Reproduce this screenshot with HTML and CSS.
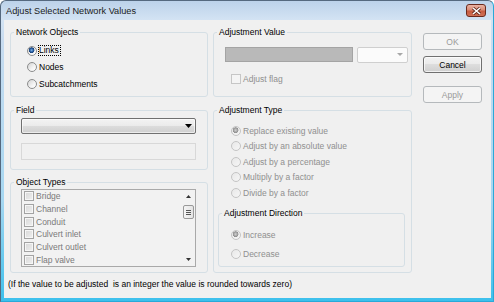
FILE: index.html
```html
<!DOCTYPE html>
<html>
<head>
<meta charset="utf-8">
<link rel="stylesheet" href="styles.css">
</head>
<body>
<div class="window">
  <div class="titlebar">
    <span class="title">Adjust Selected Network Values</span>
    <span class="close"><svg width="11" height="8" viewBox="0 0 11 8"><path d="M2 1l7 6M9 1L2 7" stroke="#5a2418" stroke-width="3"/><path d="M2 1l7 6M9 1L2 7" stroke="#fff" stroke-width="1.6"/></svg></span>
  </div>
  <div class="client">
    <div class="main">
      <div class="col-left">
        <fieldset class="group g-netobj">
          <legend>Network Objects</legend>
          <div class="netobj-body">
            <div class="opt"><span class="radio checked"></span><span class="focus">Links</span></div>
            <div class="opt"><span class="radio"></span><span>Nodes</span></div>
            <div class="opt"><span class="radio"></span><span>Subcatchments</span></div>
          </div>
        </fieldset>
        <fieldset class="group g-field">
          <legend>Field</legend>
          <div class="field-body">
            <div class="combo"><svg width="7" height="4" viewBox="0 0 7 4"><path d="M0 0h7L3.5 4z" fill="#000"/></svg></div>
            <div class="edit-dis"></div>
          </div>
        </fieldset>
        <fieldset class="group g-types">
          <legend>Object Types</legend>
          <div class="types-body">
            <div class="listbox">
              <div class="items">
                <div class="item"><span class="chk list"></span><span>Bridge</span></div>
                <div class="item"><span class="chk list"></span><span>Channel</span></div>
                <div class="item"><span class="chk list"></span><span>Conduit</span></div>
                <div class="item"><span class="chk list"></span><span>Culvert inlet</span></div>
                <div class="item"><span class="chk list"></span><span>Culvert outlet</span></div>
                <div class="item"><span class="chk list"></span><span>Flap valve</span></div>
              </div>
              <div class="sb">
                <div class="sb-btn"><svg width="5" height="3" viewBox="0 0 5 3"><path d="M0 3h5L2.5 0z" fill="#333"/></svg></div>
                <div class="sb-track">
                  <div class="thumb"><span></span><span></span><span></span></div>
                </div>
                <div class="sb-btn"><svg width="5" height="3" viewBox="0 0 5 3"><path d="M0 0h5L2.5 3z" fill="#333"/></svg></div>
              </div>
            </div>
          </div>
        </fieldset>
      </div>
      <div class="col-mid">
        <fieldset class="group g-value">
          <legend>Adjustment Value</legend>
          <div class="value-body">
            <div class="value-row">
              <div class="edit-gray"></div>
              <div class="combo-dis"><svg width="6" height="3" viewBox="0 0 6 3"><path d="M0 0h6L3 3z" fill="#a8a8a8"/></svg></div>
            </div>
            <div class="chk-row"><span class="chk dis"></span><span class="dis-text">Adjust flag</span></div>
          </div>
        </fieldset>
        <fieldset class="group g-type">
          <legend>Adjustment Type</legend>
          <div class="type-body">
            <div class="opt t"><span class="radio dis checked"></span><span class="dis-text">Replace existing value</span></div>
            <div class="opt t"><span class="radio dis"></span><span class="dis-text">Adjust by an absolute value</span></div>
            <div class="opt t"><span class="radio dis"></span><span class="dis-text">Adjust by a percentage</span></div>
            <div class="opt t"><span class="radio dis"></span><span class="dis-text">Multiply by a factor</span></div>
            <div class="opt t"><span class="radio dis"></span><span class="dis-text">Divide by a factor</span></div>
            <fieldset class="group g-dir">
              <legend>Adjustment Direction</legend>
              <div class="dir-body">
                <div class="opt d"><span class="radio dis checked"></span><span class="dis-text">Increase</span></div>
                <div class="opt d"><span class="radio dis"></span><span class="dis-text">Decrease</span></div>
              </div>
            </fieldset>
          </div>
        </fieldset>
      </div>
      <div class="col-btns">
        <div class="btn disabled">OK</div>
        <div class="btn cancel">Cancel</div>
        <div class="btn disabled apply">Apply</div>
      </div>
    </div>
    <p class="note">(If the value to be adjusted&nbsp; is an integer the value is rounded towards zero)</p>
  </div>
</div>
</body>
</html>
```

FILE: styles.css
```css
* { box-sizing: border-box; }
html, body { margin: 0; padding: 0; }
body {
  font-family: "Liberation Sans", Arial, sans-serif;
  font-size: 8.5px;
  line-height: 12px;
  color: #000;
  background: #fff;
}
.window {
  width: 494px;
  height: 302px;
  display: flex;
  flex-direction: column;
  border: 1px solid #55697f;
  border-right-color: #2aa9d8;
  border-bottom-color: #2aa9d8;
  border-radius: 6px 6px 0 0;
  background: linear-gradient(to bottom, #bcd2ea 0, #d3e3f3 19px, #c8dcf0 40px, #a6d7f1 200px, #3cc0ec 300px);
  padding: 0 2px 3px 3px;
}
.titlebar {
  height: 19px;
  flex: none;
  display: flex;
  align-items: center;
  justify-content: space-between;
  padding: 0 5px 0 2px;
}
.title {
  font-size: 9.2px;
  color: #1b1b1b;
}
.close {
  width: 20px;
  height: 13px;
  border: 1px solid #6b2a1e;
  border-radius: 3px;
  background: linear-gradient(to bottom, #eab3a4 0, #d98c77 45%, #c75b40 55%, #cf7056 100%);
  display: flex;
  align-items: center;
  justify-content: center;
}
.client {
  flex: 1;
  background: #f0f0f0;
  padding-top: 6px;
}
.main {
  display: flex;
  padding-left: 6px;
}
.group {
  margin: 0;
  padding: 0;
  min-width: 0;
  border: 1px solid #d5dfe5;
  border-radius: 3px;
}
.group legend {
  padding: 0 2px;
  margin-left: 3px;
  line-height: 12px;
}
.col-left {
  width: 198px;
  flex: none;
  display: flex;
  flex-direction: column;
}
.g-netobj { height: 71px; }
.g-field { height: 66px; margin-top: 7px; }
.g-types { height: 97px; margin-top: 6px; }

.netobj-body { padding: 4.5px 0 0 16px; }
.opt {
  display: flex;
  align-items: center;
  height: 16.5px;
  gap: 2px;
  white-space: nowrap;
}
.focus {
  border: 1px dotted #000;
  padding: 0 1px 0 0;
  margin-left: -1px;
  line-height: 9px;
}
.radio {
  width: 10px;
  height: 10px;
  flex: none;
  border-radius: 50%;
  border: 1px solid #8b8c8c;
  background: linear-gradient(135deg, #d2d2d2, #f4f4f4 60%, #ffffff);
}
.radio.checked {
  background:
    radial-gradient(circle at 45% 40%, #7fb4e4 0, #2b63a8 1.6px, #173f78 2.6px, transparent 3.1px),
    linear-gradient(135deg, #d2d2d2, #f4f4f4 60%, #ffffff);
}
.radio.dis {
  border-color: #c4c4c4;
  background: linear-gradient(135deg, #e8e8e8, #f6f6f6);
}
.radio.dis.checked {
  background:
    radial-gradient(circle at 45% 40%, #d0d0d0 0, #a4a4a4 1.8px, #8e8e8e 2.6px, transparent 3.1px),
    linear-gradient(135deg, #e8e8e8, #f6f6f6);
}
.dis-text { color: #8f8f8f; }

.field-body { padding: 2px 0 0 10px; }
.combo {
  width: 175px;
  height: 16px;
  border: 1px solid #707070;
  border-radius: 2px;
  background: linear-gradient(to bottom, #f3f3f3 0, #ebebeb 48%, #dcdcdc 52%, #cfcfcf 100%);
  box-shadow: inset 0 0 0 1px rgba(255,255,255,0.6);
  display: flex;
  align-items: center;
  justify-content: flex-end;
  padding-right: 3px;
}
.edit-dis {
  width: 175px;
  height: 17px;
  margin-top: 9px;
  border: 1px solid #d8d8d8;
  background: #f0f0f0;
}

.types-body { padding: 1px 0 0 10px; }
.listbox {
  width: 175px;
  height: 78px;
  border: 1px solid #a9a9a9;
  background: #f2f2f2;
  display: flex;
}
.items { flex: 1; padding-left: 2px; }
.item {
  height: 12.67px;
  display: flex;
  align-items: center;
  gap: 2px;
  color: #7a7a7a;
}
.chk {
  width: 10px;
  height: 10px;
  flex: none;
  border: 1px solid #8e8f8f;
  background: linear-gradient(135deg, #dcdcdc, #f8f8f8);
  box-shadow: inset 0 0 0 1px #f4f4f4;
}
.chk.list {
  border-color: #a3a3a3;
  background: linear-gradient(135deg, #d8d8d8, #efefef);
  box-shadow: inset 0 0 0 1px #f6f6f6;
}
.chk.dis {
  border-color: #c6c6c6;
  background: #f4f4f4;
  box-shadow: none;
}
.sb {
  width: 13px;
  flex: none;
  display: flex;
  flex-direction: column;
  margin-right: 0;
}
.sb-btn {
  height: 13px;
  display: flex;
  align-items: center;
  justify-content: center;
}
.sb-track { flex: 1; padding: 2px 1px 0; }
.thumb {
  height: 14px;
  border: 1px solid #999;
  border-radius: 2px;
  background: linear-gradient(to right, #f4f4f4, #e4e4e4);
  display: flex;
  flex-direction: column;
  align-items: center;
  justify-content: center;
  gap: 1px;
}
.thumb span {
  width: 5px;
  height: 1px;
  background: #555;
}

.col-mid {
  width: 199px;
  flex: none;
  margin-left: 5px;
}
.g-value { height: 71px; }
.value-body { padding: 8.5px 0 0 11px; }
.value-row {
  display: flex;
  align-items: center;
  gap: 4px;
}
.edit-gray {
  width: 128px;
  height: 15px;
  border: 1px solid #a4a4a4;
  background: #b9b9b9;
}
.combo-dis {
  width: 51px;
  height: 16px;
  border: 1px solid #cfcfcf;
  border-radius: 2px;
  background: #fbfbfb;
  display: flex;
  align-items: center;
  justify-content: flex-end;
  padding-right: 4px;
}
.chk-row {
  display: flex;
  align-items: center;
  gap: 2px;
  margin: 10.5px 0 0 6px;
  height: 11px;
}

.g-type { height: 169px; margin-top: 7px; }
.type-body { padding: 7px 0 0 4px; }
.opt.t { height: 15.5px; padding-left: 13px; }
.g-dir { width: 187px; height: 60px; margin-top: 6.5px; }
.g-dir legend { margin-left: 3px; }
.dir-body { padding: 6.5px 0 0 12px; }
.opt.d { height: 19px; }

.col-btns {
  width: 59px;
  flex: none;
  margin-left: 11px;
  padding-top: 7px;
  display: flex;
  flex-direction: column;
}
.btn {
  height: 17px;
  border: 1px solid #707070;
  border-radius: 3px;
  background: linear-gradient(to bottom, #f2f2f2 0, #ebebeb 45%, #dddddd 50%, #cfcfcf 100%);
  box-shadow: inset 0 0 0 1px rgba(255,255,255,0.7);
  display: flex;
  align-items: center;
  justify-content: center;
}
.btn.disabled {
  border-color: #b5b9bc;
  background: #f4f4f4;
  box-shadow: none;
  color: #9a9a9a;
}
.btn.cancel { margin-top: 6px; }
.btn.apply { margin-top: 13px; }

.note {
  margin: 5px 0 0 0;
  padding-left: 4px;
  white-space: nowrap;
}
```
